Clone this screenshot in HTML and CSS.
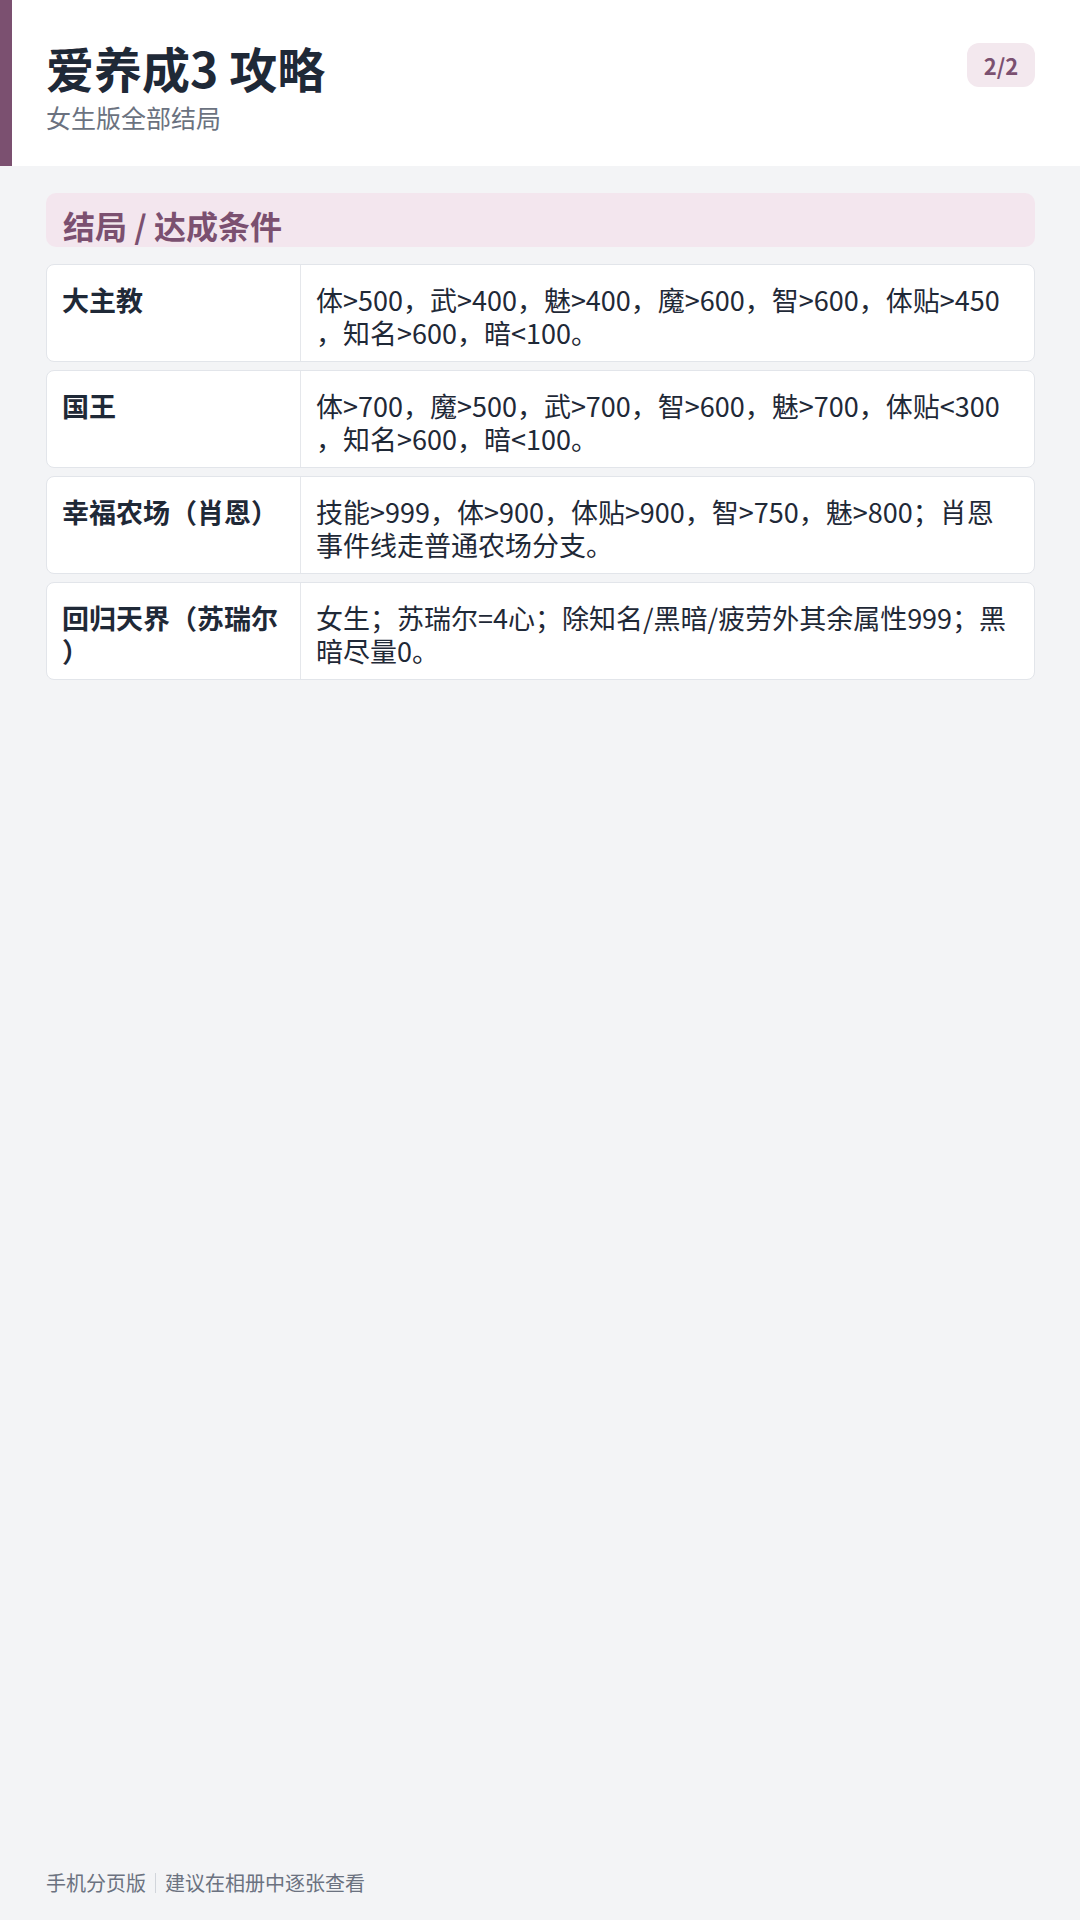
FILE: index.html
```html
<!DOCTYPE html>
<html lang="zh-CN">
<head>
	<meta charset="UTF-8">
	<meta name="viewport" content="width=device-width, initial-scale=1.0">
	<link rel="stylesheet" href="styles.css">
	<title>爱养成3 攻略</title>
</head>
<body>
	<div class="page">
		<header class="top">
			<div class="heading">
				<h1 class="title">爱养成3 攻略</h1>
				<p class="sub">女生版全部结局</p>
			</div>
			<span class="badge">2/2</span>
		</header>

		<main class="content">
			<h2 class="section">结局 / 达成条件</h2>
			<div class="rows">
				<div class="row">
					<div class="name">大主教</div>
					<div class="cond">体&gt;500，武&gt;400，魅&gt;400，魔&gt;600，智&gt;600，体贴&gt;450，知名&gt;600，暗&lt;100。</div>
				</div>
				<div class="row">
					<div class="name">国王</div>
					<div class="cond">体&gt;700，魔&gt;500，武&gt;700，智&gt;600，魅&gt;700，体贴&lt;300，知名&gt;600，暗&lt;100。</div>
				</div>
				<div class="row">
					<div class="name">幸福农场（肖恩）</div>
					<div class="cond">技能&gt;999，体&gt;900，体贴&gt;900，智&gt;750，魅&gt;800；肖恩事件线走普通农场分支。</div>
				</div>
				<div class="row">
					<div class="name">回归天界（苏瑞尔）</div>
					<div class="cond">女生；苏瑞尔=4心；除知名/黑暗/疲劳外其余属性999；黑暗尽量0。</div>
				</div>
			</div>
		</main>

		<footer class="foot">手机分页版<span class="sep"></span>建议在相册中逐张查看</footer>
	</div>
</body>
</html>
```

FILE: styles.css
```css
* {
  box-sizing: border-box;
}
html, body {
  margin: 0;
  padding: 0;
}
body {
  background: #f3f4f6;
  color: #1f2937;
  font-family: "Noto Sans CJK SC", "Noto Sans", sans-serif;
}
.page {
  display: flex;
  flex-direction: column;
  min-height: 1920px;
}

/* header */
.top {
  display: flex;
  justify-content: space-between;
  align-items: flex-start;
  height: 166px;
  padding: 38px 45px 0 34px;
  border-left: 12px solid #7b5070;
  background: #fff;
}
.title {
  margin: 0;
  font-size: 48px;
  font-weight: 700;
  line-height: 58px;
}
.sub {
  margin: 6px 0 0;
  color: #6b7280;
  font-size: 25px;
  line-height: 30px;
}
.badge {
  margin-top: 5px;
  width: 68px;
  height: 44px;
  border-radius: 12px;
  background: #f3e8ee;
  color: #7b5070;
  font-size: 22px;
  font-weight: 700;
  line-height: 44px;
  text-align: center;
}

/* table */
.content {
  padding: 27px 45px 0 46px;
}
.section {
  margin: 0;
  height: 54px;
  padding: 12px 17px 0;
  border-radius: 10px;
  background: #f3e6ee;
  color: #7b5070;
  font-size: 32px;
  font-weight: 700;
  line-height: 40px;
}
.rows {
  display: flex;
  flex-direction: column;
  gap: 8px;
  margin-top: 17px;
}
.row {
  display: grid;
  grid-template-columns: 254px 1fr;
  border: 1px solid #e2e5ea;
  border-radius: 8px;
  background: #fff;
  font-size: 27px;
  line-height: 33px;
  line-break: anywhere;
}
.name {
  padding: 18px 15px 12px;
  border-right: 1px solid #e5e7eb;
  font-weight: 700;
}
.cond {
  padding: 18px 15px 12px;
}

/* footer */
.foot {
  display: flex;
  align-items: center;
  margin-top: auto;
  padding: 0 46px 23px;
  color: #6b7280;
  font-size: 20px;
  line-height: 28px;
}
.sep {
  width: 1px;
  height: 20px;
  margin: 0 9px;
  background: #d1d5db;
}
```
